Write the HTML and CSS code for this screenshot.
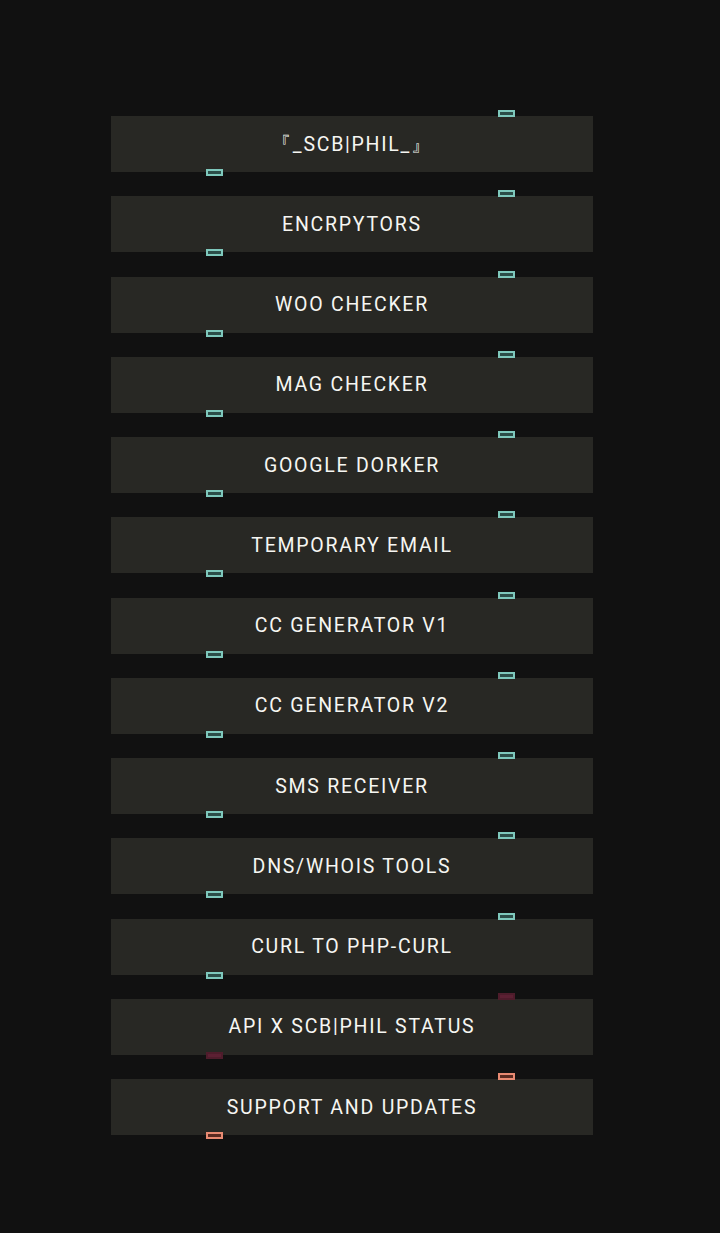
FILE: index.html
```html
<!DOCTYPE html>
<html lang="en">

<head>
    <meta charset="UTF-8">
    <meta name="viewport" content="width=device-width, initial-scale=1.0">
    <title>SCB|PHIL Tools</title>
    <link rel="stylesheet" href="styles.css">
</head>

<body>
    <nav class="menu">
        <a class="menu-item">『_SCB|PHIL_』</a>
        <a class="menu-item">ENCRPYTORS</a>
        <a class="menu-item">WOO CHECKER</a>
        <a class="menu-item">MAG CHECKER</a>
        <a class="menu-item">GOOGLE DORKER</a>
        <a class="menu-item">TEMPORARY EMAIL</a>
        <a class="menu-item">CC GENERATOR V1</a>
        <a class="menu-item">CC GENERATOR V2</a>
        <a class="menu-item">SMS RECEIVER</a>
        <a class="menu-item">DNS/WHOIS TOOLS</a>
        <a class="menu-item">CURL TO PHP-CURL</a>
        <a class="menu-item status-off">API X SCB|PHIL STATUS</a>
        <a class="menu-item support">SUPPORT AND UPDATES</a>
    </nav>
</body>

</html>
```

FILE: styles.css
```css
*,
*::before,
*::after {
    box-sizing: border-box;
}

:root {
    --led-border: #7ec8bc;
    --led-fill: #2b4d48;
}

body {
    background: #111111;
    margin: 0;
    font-family: Roboto, 'Liberation Sans', sans-serif;
}

.menu {
    display: flex;
    flex-direction: column;
    gap: 24.25px;
    width: 482px;
    margin-left: 111px;
    padding: 116px 0 98px;
}

.menu-item {
    position: relative;
    display: flex;
    align-items: center;
    justify-content: center;
    height: 56px;
    background: #282824;
    color: #f6f6f2;
    font-size: 19.5px;
    letter-spacing: 1.75px;
    cursor: pointer;
}

/* little indicator lights on the edges */
.menu-item::before,
.menu-item::after {
    content: '';
    position: absolute;
    width: 17px;
    height: 7px;
    border: 2px solid var(--led-border);
    background: var(--led-fill);
}

.menu-item::before {
    top: -6px;
    left: 387px;
}

.menu-item::after {
    top: 53px;
    left: 95px;
}

.status-off {
    --led-border: #4e1c2b;
    --led-fill: #5c2033;
}

.support {
    --led-border: #e88a72;
    --led-fill: #5a2a20;
}
```
